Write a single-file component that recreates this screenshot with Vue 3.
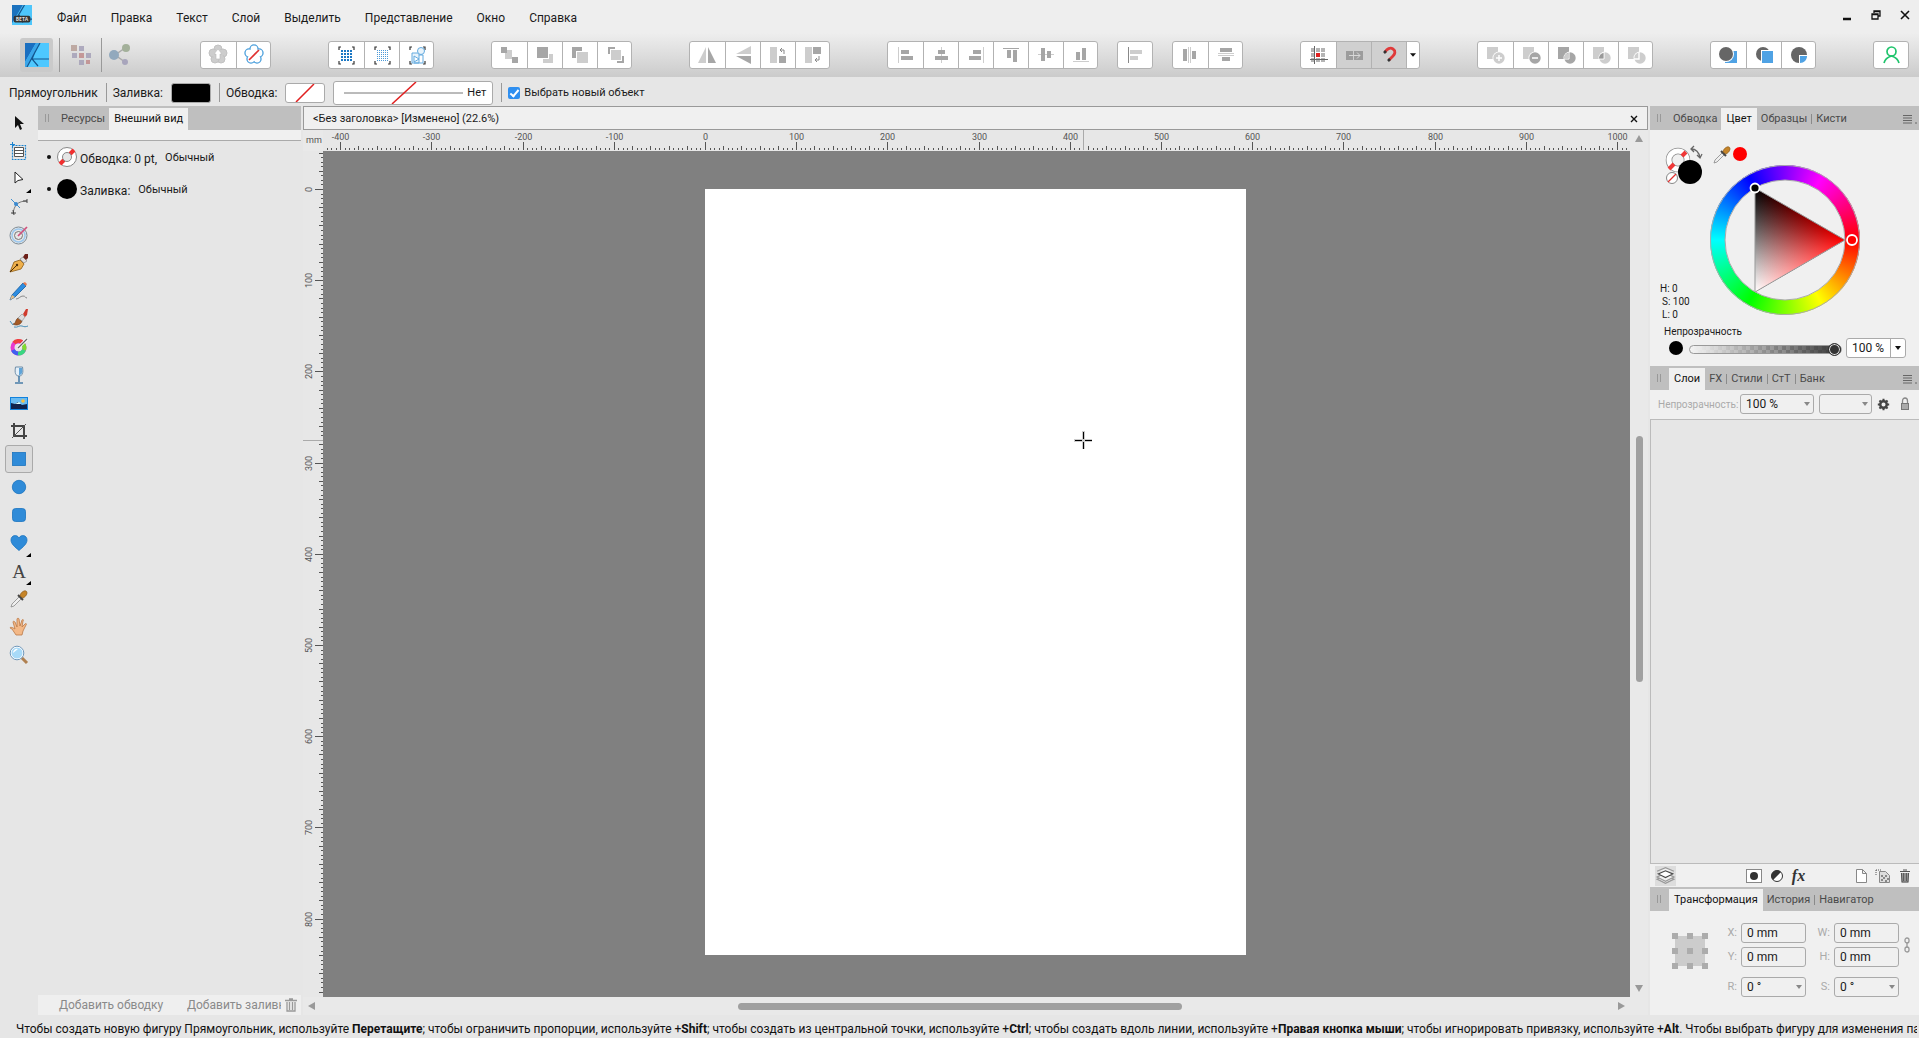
<script setup>
import { ref } from 'vue'

const menus = ['Файл', 'Правка', 'Текст', 'Слой', 'Выделить', 'Представление', 'Окно', 'Справка']

const D = '#a6a6a6'
const L = '#cdcdcd'
const rect = (x, y, w, h, c) => `<rect x="${x}" y="${y}" width="${w}" height="${h}" fill="${c}"/>`
const petals = (attrs, r) =>
  [[17, 7], [22, 11], [20, 17], [14, 17], [12, 11]].map(([x, y]) => `<circle cx="${x}" cy="${y}" r="${r}" ${attrs}/>`).join('')
const corners = '<path d="M10 8V5h2M23 5h2v3M25 19v3h-2M12 22h-2v-3" fill="none" stroke="#333" stroke-width="1.2"/>'
const dots = (step, size, n, c) => {
  let s = ''
  for (let i = 0; i < n; i++) for (let j = 0; j < n; j++) s += rect(12 + i * step, 8 + j * step, size, size, c)
  return s
}
const boolBase = (sq, ci, extra = '') =>
  rect(9, 5, 11, 12, sq) + `<circle cx="21" cy="16" r="6.5" fill="#fff"/><circle cx="21" cy="16" r="5.7" fill="${ci}"/>` + extra

const icons = {
  flowerAdd: petals(`fill="${L}" stroke="#c2c2c2"`, 4) + `<circle cx="17" cy="12.500" r="5" fill="${L}"/><path d="M17 7l4 5h-2v5h-4v-5h-2z" fill="#fff" stroke="#bbb" stroke-width=".6"/>`,
  flowerNone: petals('fill="#fff" stroke="#4a9fdc" stroke-width="2.2"', 3.6) + petals('fill="#fff"', 3.4) + '<circle cx="17" cy="12.500" r="5" fill="#fff"/><path d="M12 18L22 8" stroke="#e03030" stroke-width="1.6"/>',
  gridBold: corners + dots(3, 2, 4, '#1c78c4'),
  gridFine: corners + dots(2, 1, 6, '#4d9ad8'),
  shapesSel: corners + '<g fill="#e8f3fb" stroke="#62aadf"><path d="M12 11h7v10h-7zM14 14v6l5-3z"/><circle cx="21" cy="9" r="3.500"/><path d="M19 13h4v8h-9"  fill="none"/></g>',
  ordBack: rect(13, 8, 7, 9, L) + rect(9, 5, 6, 6, D) + rect(20, 15, 6, 6, D),
  ordDown: rect(15, 12, 10, 9, L) + rect(8, 4, 13, 13, '#fff') + rect(9, 5, 11, 11, D),
  ordUp: rect(9, 5, 10, 11, D) + rect(13, 9, 13, 13, '#fff') + rect(14, 10, 11, 11, L),
  ordFront: rect(10, 5, 7, 7, D) + rect(19, 14, 7, 7, D) + rect(12, 7, 12, 12, '#fff') + rect(13, 8, 10, 10, L),
  flipH: `<path d="M16 5v16H8z" fill="${L}"/><path d="M18 5v16h8z" fill="${D}"/>`,
  flipV: `<path d="M25 4v8H10z" fill="${L}"/><path d="M25 14v8L10 14z" fill="${D}"/>`,
  rotL: rect(9, 5, 7, 16, L) + rect(18, 14, 7, 7, D) + `<path d="M23 12V8h-4m2-2l-2 2 2 2" fill="none" stroke="#888"/>`,
  rotR: rect(9, 5, 7, 16, L) + rect(17, 5, 8, 7, D) + `<path d="M23 14v4h-4m2-2l-2 2 2 2" fill="none" stroke="#888"/>`,
  alL: rect(10, 5, 1, 16, L) + rect(13, 8, 8, 4, D) + rect(13, 14, 12, 4, D),
  alC: rect(17, 5, 1, 16, L) + rect(14, 8, 7, 4, D) + rect(11, 14, 13, 4, D),
  alR: rect(24, 5, 1, 16, L) + rect(14, 8, 8, 4, D) + rect(10, 14, 12, 4, D),
  alT: rect(9, 6, 16, 1, D) + rect(13, 8, 4, 8, D) + rect(19, 8, 4, 12, D),
  alM: rect(9, 12, 16, 1, L) + rect(12, 6, 4, 13, D) + rect(18, 9, 4, 7, D),
  alB: rect(9, 19, 16, 1, L) + rect(12, 10, 4, 8, D) + rect(18, 6, 4, 12, D),
  spL: rect(10, 5, 1, 16, '#888') + rect(12, 8, 12, 4, L) + rect(12, 14, 8, 4, L),
  spH: rect(10, 7, 4, 12, D) + rect(15, 5, 1, 16, L) + rect(17, 5, 1, 16, L) + rect(19, 9, 4, 8, D),
  spV: rect(11, 6, 12, 4, D) + rect(9, 11, 16, 1, L) + rect(9, 13, 16, 1, L) + rect(13, 15, 8, 4, D),
  snapGrid: [0, 1, 2].map(i => [0, 1, 2].map(j => rect(10 + i * 5, 6 + j * 5, 4, 4, i === 1 && j === 1 ? '#e02020' : '#b4b4b4')).join('')).join('') +
    '<path d="M13.500 4v18M9 17.500h18" stroke="#666"/>',
  snapMove: rect(9, 9, 7, 9, '#9c9c9c') + rect(17, 9, 9, 9, '#9c9c9c') + '<path d="M12 13.500h11m-3-3l3 3-3 3" fill="none" stroke="#d8d8d8"/>',
  magnet: '<path d="M13 10c2-3 5-5 8-3s2 5 0 7l-4 4" fill="none" stroke="#e03a3a" stroke-width="2.800"/><path d="M12 11l2-2M16 19l2-2" stroke="#333" stroke-width="2.600"/>',
  caret: '<path d="M3.500 11h7L7 15z" fill="#111"/>',
  bAdd: boolBase(L, L, '<path d="M21 13v6M18 16h6" stroke="#fff" stroke-width="1.500"/>'),
  bSub: boolBase(L, D, '<path d="M18 16h6" stroke="#fff" stroke-width="1.500"/>'),
  bInt: boolBase(D, D, '<path d="M20 10v7h-5" fill="none" stroke="#fff"/><path d="M19.500 11v5.500H15c0-3 2-5 4.500-5.500" fill="#cdcdcd"/>'),
  bXor: boolBase(L, L, '<path d="M20 10v7h-5" fill="none" stroke="#fff"/><path d="M19.500 11v5.500H15c0-3 2-5 4.500-5.500" fill="#999"/>'),
  bDiv: boolBase(L, L, '<path d="M20 10v7h-5" fill="none" stroke="#fff" stroke-width="1.400"/>'),
  inBack: rect(14, 9, 12, 12, '#4fa2e4') + '<circle cx="15" cy="12" r="8" fill="#fff"/><circle cx="15" cy="12" r="7" fill="#666"/>',
  inTop: '<circle cx="16" cy="12" r="7" fill="#666"/>' + rect(14, 8, 13, 14, '#fff') + rect(15, 9, 11, 12, '#4fa2e4'),
  inside: '<circle cx="17" cy="13" r="8" fill="#666"/><path d="M17 13h9v9h-9z" fill="#fff"/><path d="M18 14h7c0 4-3 7-7 7z" fill="#4fa2e4"/>',
  user: '<g fill="none" stroke="#1fc46c" stroke-width="1.700"><circle cx="17.500" cy="9.500" r="4.500"/><path d="M10 21c1-4 4-6 7.500-7 3.500 1 6.500 3 7.500 7"/></g>'
}

const groups = [
  ['flowerAdd', 'flowerNone'],
  ['gridBold', 'gridFine', 'shapesSel'],
  ['ordBack', 'ordDown', 'ordUp', 'ordFront'],
  ['flipH', 'flipV', 'rotL', 'rotR'],
  ['alL', 'alC', 'alR', 'alT', 'alM', 'alB'],
  ['spL'],
  ['spH', 'spV'],
  ['snapGrid', 'snapMove', 'magnet', 'caret'],
  ['bAdd', 'bSub', 'bInt', 'bXor', 'bDiv'],
  ['inBack', 'inTop', 'inside'],
  ['user']
]

const blue = 'fill="#2f8bd8" stroke="#1b74bf" stroke-width=".8"'
const dropper = '<path d="M2 18l1-3 8-8 2 2-8 8z" fill="#eee" stroke="#888" stroke-width=".8"/><path d="M9 6l5 5" stroke="#444" stroke-width="2"/><path d="M11 7c0-3 4-6 6-5s1 5-3 7z" fill="#c58428" stroke="#7d5014" stroke-width=".6"/>'
const tools = [
  { n: 'Перемещение', s: '<path d="M6 3v12l3-3 2 5 2-1-2-5h4z" fill="#111"/>' },
  { n: 'Монтажная область', s: '<rect x="3.500" y="4.500" width="13" height="14" fill="none" stroke="#1c84d0" stroke-dasharray="2 1" stroke-width="1.200"/><path d="M1 3.500h5M3.500 1v5" stroke="#1c84d0"/><path d="M5.500 6.500h9v9h-9zM5.500 9.500h9M5.500 12.500h9" fill="#fff" stroke="#555"/>' },
  { n: 'Узел', m: 1, s: '<path d="M6 3v11l3-2.500 5-1z" fill="#fff" stroke="#222"/>' },
  { n: 'Угол', s: '<path d="M18 4C9 4 5 8 4 17" fill="none" stroke="#777"/><path d="M2 2l9 9" stroke="#4090d0"/><circle cx="7" cy="7" r="2" fill="#3a8ad0"/><path d="M18 2v4M14 4h4M2 16h5M4 13l1 5" stroke="#444"/>' },
  { n: 'Контур', s: '<g fill="none"><circle cx="9.500" cy="10.500" r="8.500" stroke="#7d8b95"/><circle cx="9.500" cy="10.500" r="6.500" stroke="#9cc8ee" stroke-width="1.500"/><circle cx="9.500" cy="10.500" r="4" stroke="#777"/></g><path d="M9 11l9-9" stroke="#d0507c" stroke-width="1.700"/>' },
  { n: 'Перо', s: '<path d="M1 19L5 9l6-2 4 4-3 5z" fill="#eeb04c" stroke="#8c5a14" stroke-width=".8"/><path d="M1 19l7-7" stroke="#503008"/><circle cx="8" cy="12" r="1.200" fill="#503008"/><path d="M11 6l3-2 4 4-3 2z" fill="#ddd" stroke="#777" stroke-width=".6"/><path d="M14 4l2-3h3v4l-2 2z" fill="#6c1f18"/>' },
  { n: 'Карандаш', s: '<path d="M1 19l2-5 11-12 3 3L6 16z" fill="#2e8de0" stroke="#155a9c" stroke-width=".8"/><path d="M1 19l2-5 3 2z" fill="#e9be84"/><path d="M14 2l2-1 2 2-1 2z" fill="#e87c50"/><path d="M7 18c3 0 4-3 7-3s2 2 4 2" fill="none" stroke="#888"/>' },
  { n: 'Кисть', s: '<path d="M4 15c3 0 2-4 5-6l4 3c-1 4-6 5-9 3z" fill="#a65a24" stroke="#5c2f10" stroke-width=".6"/><path d="M9 9l4-4 3 3-3 4z" fill="#ddd" stroke="#888" stroke-width=".6"/><path d="M14 5l3-5h2l-1 6-2 2z" fill="#d03a2c"/><path d="M1 12l3 4M5 18c4 1 5-2 8-1s3 1 6 0" fill="none" stroke="#4a90b8"/>' },
  { n: 'Заливка', s: '<circle cx="9.500" cy="10.500" r="6" fill="none" stroke="#e83ad0" stroke-width="4"/><path d="M5 6a6 6 0 0 1 8-1" fill="none" stroke="#f04040" stroke-width="4"/><path d="M14 7a6 6 0 0 1 1 6" fill="none" stroke="#80dc30" stroke-width="4"/><path d="M15 13a6 6 0 0 1-6 3.500" fill="none" stroke="#38d880" stroke-width="4"/><path d="M9 16.500A6 6 0 0 1 4 13" fill="none" stroke="#3f60f0" stroke-width="4"/><path d="M9 11L18 2" stroke="#fff" stroke-width="3"/><path d="M9 11L18 2" stroke="#666" stroke-width="1.300"/>' },
  { n: 'Прозрачность', s: '<path d="M6.500 2h7c1 6 0 9-3.500 9S5.500 8 6.500 2z" fill="#e4eff8" stroke="#6f8ea8"/><path d="M10 3h3c1 5-.5 7-3 7z" fill="#5fa4d8"/><path d="M10 11v6M6 18h8" stroke="#4a7ea8" stroke-width="1.600"/>' },
  { n: 'Изображение', s: '<rect x="1.500" y="4.500" width="17" height="12" fill="#6bbcf2" stroke="#1282dc"/><circle cx="14" cy="8" r="1.800" fill="#f8c040"/><path d="M2 10l4 1 3-2 4 3 5-1v5H2z" fill="#11234c"/><path d="M6 11l4-2 2 2z" fill="#dff"/>' },
  { n: 'Обрезка', s: '<path d="M5 2v13h13M2 5h13v13" fill="none" stroke="#444" stroke-width="2"/><path d="M3 17L17 3" stroke="#555"/>' },
  { n: 'Прямоугольник', a: 1, s: `<rect x="3.500" y="3.500" width="13" height="13" ${blue}/>` },
  { n: 'Эллипс', s: `<circle cx="10" cy="10" r="6.700" ${blue}/>` },
  { n: 'Скругленный прямоугольник', s: `<rect x="3.500" y="3.500" width="13" height="13" rx="3" ${blue}/>` },
  { n: 'Сердце', m: 1, s: `<path d="M10 17.500C6 14 2 11 2 7c0-5 6-6 8-2 2-4 8-3 8 2 0 4-4 7-8 10.500z" ${blue}/>` },
  { n: 'Текст', m: 1, s: '<text x="10" y="17" text-anchor="middle" font-family="Liberation Serif, serif" font-size="19" fill="#444">A</text>' },
  { n: 'Пипетка', s: dropper },
  { n: 'Рука', s: '<path d="M7 18l-4-6-2-1c0-1 2-1 5 1L4 5c0-1 1-1 2 0l2 5V2c0-1 2-1 2 0l1 7 2-6c1-1 2 0 1 1l-1 6 3-3c1-1 2 0 1 1l-3 6-1 4z" fill="#f3b887" stroke="#bb7846" stroke-width=".8"/>' },
  { n: 'Масштаб', s: '<path d="M12 12l6 6" stroke="#b08050" stroke-width="3"/><circle cx="8" cy="8" r="6.300" fill="#a8daf8" stroke="#fff" stroke-width="1.500"/><circle cx="8" cy="8" r="6.800" fill="none" stroke="#4d7ea8" stroke-width=".8"/><path d="M4 8a4 4 0 0 1 5-4z" fill="#fff"/>' }
]

const SCALE = 0.912
const ORIGIN_X = 382
const ORIGIN_Y = 38
const makeTicks = (from, to) => {
  const out = []
  for (let v = from; v <= to; v += 5) out.push({ v, len: v % 100 === 0 ? 8 : v % 20 === 0 ? 4 : 2 })
  return out
}
const ticksX = makeTicks(-415, 1010)
const ticksY = makeTicks(-40, 880)
const px = v => Math.round(ORIGIN_X + v * SCALE) + 0.5
const py = v => Math.round(ORIGIN_Y + v * SCALE) + 0.5

const selectNew = ref(true)
const opacity = ref(100)

const hints = [
  ['Чтобы создать новую фигуру Прямоугольник, используйте ', 'Перетащите'],
  ['; чтобы ограничить пропорции, используйте +', 'Shift'],
  ['; чтобы создать из центральной точки, используйте +', 'Ctrl'],
  ['; чтобы создать вдоль линии, используйте +', 'Правая кнопка мыши'],
  ['; чтобы игнорировать привязку, используйте +', 'Alt'],
  ['. Чтобы выбрать фигуру для изменения параметров', '']
]
const fields = [
  [['X', '0 mm'], ['W', '0 mm']],
  [['Y', '0 mm'], ['H', '0 mm']]
]
const anchors = [0, 1, 2, 3, 4, 5, 6, 7, 8]
</script>

<template>
  <div class="app">
    <header class="title">
      <svg class="logo" viewBox="0 0 24 24">
        <rect width="24" height="24" fill="#4ec6fb" /><path d="M0 0h13L0 22z" fill="#1b72be" />
        <path d="M15 0L3 20M8 11l5 10M4 17h20" stroke="#14568f" stroke-width="1.5" fill="none" />
        <rect x="2" y="13" width="20" height="8" rx="2" fill="#333" />
        <text x="12" y="19" text-anchor="middle" font-size="6" font-weight="700" fill="#ddd" font-family="Open Sans, sans-serif">BETA</text>
      </svg>
      <nav class="menu"><button v-for="m in menus" :key="m">{{ m }}</button></nav>
      <div class="win">
        <button aria-label="Свернуть"><svg viewBox="0 0 12 12"><path d="M2 10h8" stroke="#111" stroke-width="2.500" /></svg></button>
        <button aria-label="Восстановить"><svg viewBox="0 0 12 12"><path d="M4 4V2h6v5H8M2 5h6v5H2zM2 5.500h6M4 2.500h6" fill="none" stroke="#111" stroke-width="1.300" /></svg></button>
        <button aria-label="Закрыть"><svg viewBox="0 0 12 12"><path d="M2 2l8 8M10 2l-8 8" stroke="#111" stroke-width="1.600" /></svg></button>
      </div>
    </header>

    <div class="toolbar">
      <div class="personas">
        <button class="persona on" aria-label="Designer">
          <svg viewBox="0 0 24 24">
            <rect width="24" height="24" fill="#4ec8ff" /><path d="M0 0h11L0 19z" fill="#1b6fc0" /><path d="M11 0h4L2 24H0v-5z" fill="#3aa5e8" />
            <path d="M15 0L2 24M7 16h17M10 9l-3 7 6 7" stroke="#14568f" stroke-width="1.200" fill="none" />
          </svg>
        </button>
        <button class="persona" aria-label="Pixel">
          <svg viewBox="0 0 24 24" opacity=".85">
            <path d="M2 2h6v6H2z" fill="#b8a098" /><path d="M10 3h5v5h-5zM3 10h5v5H3zM17 10h5v5h-5zM10 17h5v5h-5z" fill="#a5a1b8" /><path d="M10 10h5v5h-5zM17 17h4v4h-4z" fill="#c08c8c" />
          </svg>
        </button>
        <button class="persona" aria-label="Export">
          <svg viewBox="0 0 24 24"><path d="M17 5L7 12l10 7" fill="none" stroke="#aaa" stroke-width="1.500" /><circle cx="6" cy="12" r="5" fill="#92a9bd" /><circle cx="18" cy="5" r="4" fill="#a3b09a" /><circle cx="17" cy="19" r="3" fill="#a8a5bc" /></svg>
        </button>
      </div>
      <div v-for="(g, i) in groups" :key="i" class="group" :class="{ near: i === 5 || i === 6 }">
        <button v-for="b in g" :key="b" :class="{ pressed: b === 'snapMove' || b === 'magnet', slim: b === 'caret' }" :aria-label="b">
          <svg :viewBox="b === 'caret' ? '0 0 14 26' : '0 0 34 26'" v-html="icons[b]" />
        </button>
      </div>
    </div>

    <div class="context">
      <span>Прямоугольник</span><i class="bar"></i>
      <span>Заливка:</span><button class="swatch black" aria-label="Заливка"></button><i class="bar"></i>
      <span>Обводка:</span>
      <button class="swatch" aria-label="Обводка"><svg viewBox="0 0 38 18"><path d="M10 18L28 0" stroke="#e02020" stroke-width="1.500" /></svg></button>
      <button class="stroke">
        <svg viewBox="0 0 130 22"><path d="M10 11h119" stroke="#777" /><path d="M58 22L82 0" stroke="#e02020" stroke-width="1.500" /></svg><span>Нет</span>
      </button><i class="bar"></i>
      <label class="check"><input v-model="selectNew" type="checkbox" />Выбрать новый объект</label>
    </div>

    <main class="work">
      <aside class="tools">
        <button v-for="t in tools" :key="t.n" :class="{ sel: t.a }" :aria-label="t.n">
          <svg viewBox="0 0 20 20" v-html="t.s" /><i v-if="t.m" class="more"></i>
        </button>
      </aside>

      <section class="look">
        <div class="tabs"><i class="grip"></i><button>Ресурсы</button><button class="on">Внешний вид</button></div>
        <div class="strip"></div>
        <div class="attr">
          <b></b>
          <svg viewBox="0 0 22 22"><circle cx="11" cy="11" r="9.500" fill="#fff" stroke="#888" /><path d="M4 18l4-4M14 8l4-4" stroke="#f03030" stroke-width="4" /><circle cx="11" cy="11" r="4.500" fill="#e6e6e6" stroke="#888" /></svg>
          <span>Обводка: 0 pt,</span><em>Обычный</em>
        </div>
        <div class="attr">
          <b></b>
          <svg viewBox="0 0 22 22"><circle cx="11" cy="11" r="10" fill="#000" /></svg>
          <span>Заливка:</span><em>Обычный</em>
        </div>
        <footer class="addbar">
          <button>Добавить обводку</button><button class="cut">Добавить заливку</button>
          <button aria-label="Удалить" class="bin"><svg viewBox="0 0 12 14"><path d="M0 2.500h12M4 1h4M2 4v9h8V4M4.500 4v8M7.500 4v8" fill="none" stroke="#999" stroke-width="1.300" /></svg></button>
        </footer>
      </section>

      <section class="doc">
        <div class="doctab"><span>&lt;Без заголовка&gt; [Изменено] (22.6%)</span>
          <button aria-label="Закрыть документ"><svg viewBox="0 0 10 10"><path d="M2 2l6 6M8 2L2 8" stroke="#111" stroke-width="1.400" /></svg></button>
        </div>
        <div class="view">
          <span class="unit">mm</span>
          <svg class="rx">
            <g v-for="t in ticksX" :key="t.v">
              <path :d="`M${px(t.v)} ${20 - t.len}V20`" stroke="#555" />
              <text v-if="t.v % 100 === 0" :x="px(t.v)" y="10" text-anchor="middle">{{ t.v }}</text>
            </g>
            <path d="M760.500 0v20" stroke="#aaa" />
          </svg>
          <div class="vbar"><i class="up"></i><i class="thumb"></i><i class="down"></i></div>
          <svg class="ry">
            <g v-for="t in ticksY" :key="t.v">
              <path :d="`M${20 - t.len} ${py(t.v)}H20`" stroke="#555" />
              <text v-if="t.v % 100 === 0" :transform="`translate(9 ${py(t.v)}) rotate(-90)`" text-anchor="middle">{{ t.v }}</text>
            </g>
            <path d="M0 289.500h20" stroke="#aaa" />
          </svg>
          <div class="canvas">
            <div class="page"></div>
            <svg class="cross" viewBox="0 0 20 20"><path d="M10.500 1v18M1 10.500h18" stroke="#ccc" stroke-width="3" /><path d="M10.500 2v7M10.500 12v7M2 10.500h7M12 10.500h7" stroke="#000" stroke-width="1" /></svg>
          </div>
          <div class="hbar"><i class="left"></i><i class="thumb"></i><i class="right"></i></div>
        </div>
      </section>

      <aside class="side">
        <div class="tabs"><i class="grip"></i><button>Обводка</button><button class="on">Цвет</button><button>Образцы</button><i class="sep"></i><button>Кисти</button>
          <button class="burger" aria-label="Меню панели"><svg viewBox="0 0 14 10"><path d="M0 1.500h9M0 4h9M0 6.500h9M0 9h9M12 9h2" stroke="#666" /></svg></button></div>
        <div class="color">
          <svg class="picks" viewBox="0 0 84 42">
            <circle cx="14" cy="16" r="9" fill="none" stroke="#888" stroke-width="6.500" /><circle cx="14" cy="16" r="9" fill="none" stroke="#fff" stroke-width="5" />
            <path d="M5 25l5-5M18 12l4-4" stroke="#f03838" stroke-width="4" />
            <circle cx="26" cy="28" r="12" /><circle cx="8" cy="34" r="5.500" fill="#fff" stroke="#888" /><path d="M4 38l8-8" stroke="#e03030" stroke-width="1.300" />
            <path d="M27 5c5 0 8 3 9 9M30 2l-3 3 3 3M33 11l3 3 2-4" fill="none" stroke="#666" stroke-width="1.300" />
            <g transform="translate(48 1)" v-html="dropper" /><circle cx="76" cy="10" r="7" fill="#f00" />
          </svg>
          <div class="wheel"><div class="hole"></div><div class="tri"></div>
            <svg viewBox="0 0 150 150"><path d="M45 23l90 52-90 52z" fill="none" stroke="#999" /><circle cx="75" cy="75" r="74.500" fill="none" stroke="#aaa" /><circle cx="75" cy="75" r="60" fill="none" stroke="#aaa" />
              <circle cx="45" cy="23" r="4.500" stroke="#fff" stroke-width="1.800" /><circle cx="142" cy="75" r="5" fill="#f00" stroke="#fff" stroke-width="1.800" /></svg>
          </div>
          <div class="hsl"><div>H: 0</div><div>S: 100</div><div>L: 0</div></div>
          <label class="oplabel" for="op">Непрозрачность</label>
          <div class="oprow"><i class="dot"></i><input id="op" v-model="opacity" type="range" min="0" max="100" />
            <div class="combo"><input aria-label="Непрозрачность, %" value="100 %" /><button aria-label="Открыть"><i class="tri-d"></i></button></div></div>
        </div>

        <div class="tabs"><i class="grip"></i><button class="on">Слои</button><button>FX</button><i class="sep"></i><button>Стили</button><i class="sep"></i><button>СтТ</button><i class="sep"></i><button>Банк</button>
          <button class="burger" aria-label="Меню панели"><svg viewBox="0 0 14 10"><path d="M0 1.500h9M0 4h9M0 6.500h9M0 9h9M12 9h2" stroke="#666" /></svg></button></div>
        <div class="layrow">
          <label for="lop">Непрозрачность:</label>
          <span class="sel w74"><select id="lop"><option>100 %</option></select></span>
          <span class="sel w53"><select aria-label="Режим наложения"><option></option></select></span>
          <svg class="gear" viewBox="0 0 16 16"><circle cx="8" cy="8" r="4" fill="none" stroke="#444" stroke-width="3" /><path d="M8 1v3M8 12v3M1 8h3M12 8h3M3 3l2 2M11 11l2 2M13 3l-2 2M5 11l-2 2" stroke="#444" stroke-width="2.500" /></svg>
          <svg class="lock" viewBox="0 0 10 14"><path d="M2.500 7V4c0-4 5-4 5 0v3" fill="none" stroke="#888" stroke-width="1.300" /><rect x="1.500" y="6.500" width="7" height="6" fill="#aaa" stroke="#777" /></svg>
        </div>
        <div class="layers"></div>
        <div class="laybar">
          <button class="stack" aria-label="Слои"><svg viewBox="0 0 20 18"><g fill="#f0f0f0" stroke="#999" stroke-width="1.200"><path d="M2 12l8 4 8-4-8-4z" /><path d="M2 10l8 4 8-4-8-4z" /><path d="M2 4.500L10 1l8 3.500" /></g><path d="M3 7l7-3 7 3-7 3.500z" fill="#fff" stroke="#444" /></svg></button>
          <span class="mid">
            <button aria-label="Маска"><svg viewBox="0 0 16 14"><rect x=".5" y=".5" width="15" height="13" fill="#fff" stroke="#888" /><circle cx="8" cy="7" r="4" fill="#333" /></svg></button>
            <button aria-label="Коррекция"><svg viewBox="0 0 16 14"><circle cx="8" cy="7" r="5.500" fill="#fff" stroke="#333" /><path d="M4 11a5.500 5.500 0 0 1 8-8z" fill="#333" /></svg></button>
            <button class="fx" aria-label="Эффекты">fx</button>
          </span>
          <button aria-label="Новый слой"><svg viewBox="0 0 16 14"><path d="M3.500.5h6l4 4v9h-10zM9.500.5v4h4" fill="#fff" stroke="#888" /></svg></button>
          <button aria-label="Новый пиксельный слой"><svg viewBox="0 0 16 14"><path d="M4.500 2.500h6l4 4v7h-10z" fill="#ddd" stroke="#888" /><path d="M6 6h2v2H6zM10 6h2v2h-2zM8 8h2v2H8zM12 9h2v2h-2zM6 10h2v2H6zM10 11h2v2h-2z" fill="#888" /><path d="M1 1h6M1 1v5" stroke="#555" stroke-dasharray="1 1" /></svg></button>
          <button aria-label="Удалить слой"><svg viewBox="0 0 16 14"><path d="M4 4h8l-1 9.500H5z" fill="#aaa" /><path d="M3 2.500h10M6 1h4M4.500 4l.5 9h6l.5-9M6.700 4v8M9.300 4v8" fill="none" stroke="#555" stroke-width="1.200" /></svg></button>
        </div>

        <div class="tabs"><i class="grip"></i><button class="on">Трансформация</button><button>История</button><i class="sep"></i><button>Навигатор</button></div>
        <div class="transform">
          <div class="anchor"><i v-for="a in anchors" :key="a"></i></div>
          <div class="grid">
            <template v-for="(r, i) in fields" :key="i">
              <template v-for="f in r" :key="f[0]"><label :for="'f' + f[0]">{{ f[0] }}:</label><input :id="'f' + f[0]" :value="f[1]" /></template>
            </template>
            <template v-for="n in ['R', 'S']" :key="n">
              <label class="last" :for="'f' + n">{{ n }}:</label><span class="sel last"><select :id="'f' + n"><option>0 °</option></select></span>
            </template>
          </div>
          <svg class="link" viewBox="0 0 8 16"><g fill="none" stroke="#999" stroke-width="1.300"><rect x="2" y="1" width="4" height="5" rx="2" /><rect x="2" y="10" width="4" height="5" rx="2" /><path d="M4 5v6" /></g></svg>
        </div>
      </aside>
    </main>

    <footer class="status"><template v-for="(h, i) in hints" :key="i">{{ h[0] }}<b>{{ h[1] }}</b></template></footer>
  </div>
</template>

<style>
html, body { margin: 0; background: #e6e6e6; overflow: hidden; }
</style>

<style scoped>
.app { display: flex; flex-direction: column; height: 100vh; background: #e6e6e6; color: #1a1a1a; font: 12px/16px Roboto, "Noto Sans", sans-serif; }
.app * { box-sizing: border-box; }
button, input, select { font: inherit; color: inherit; margin: 0; padding: 0; border: 0; background: none; }
svg { display: block; }

.title { display: flex; align-items: center; height: 33px; padding: 0 8px 0 12px; background: #eee; flex: none; }
.logo { width: 20px; height: 20px; margin-bottom: 3px; }
.menu { display: flex; gap: 24px; margin: 3px 0 0 25px; flex: 1; }
.win { display: flex; gap: 17px; margin-bottom: 3px; }
.win svg { width: 12px; height: 12px; }

.toolbar { display: flex; align-items: center; height: 44px; padding: 0 9px 0 20px; flex: none; background: linear-gradient(#eee, #ddd 50%, #cbcbcb); }
.personas { display: flex; width: 123px; height: 34px; }
.persona { width: 33px; display: flex; align-items: center; justify-content: center; }
.persona svg { width: 24px; height: 24px; }
.persona.on { background: #cacaca; border-radius: 3px; }
.persona + .persona { width: 42px; border-left: 1px solid #999; }
.persona.on + .persona { margin-left: 6px; }
.persona:last-child { padding-right: 6px; }
.group { display: flex; height: 28px; margin-left: 57px; border: 1px solid #b2b2b2; border-radius: 3px; background: #fff; overflow: hidden; flex: none; }
.group.near { margin-left: 19px; }
.group button { width: 35px; }
.group button:last-child { width: 34px; }
.group button + button { border-left: 1px solid #b2b2b2; }
.group .slim:last-child { width: 13px; }
.group .pressed { background: #d0d0d0; }
.group svg { height: 26px; width: 34px; }
.group .slim svg { width: 12px; }

.context { display: flex; align-items: center; height: 29px; padding: 2px 9px 0; flex: none; }
.bar { width: 1px; height: 19px; background: #999; margin: 0 6px 0 8px; }
.swatch { width: 40px; height: 20px; margin-left: 8px; background: #fff; border: 1px solid #aaa; border-radius: 3px; }
.swatch.black { background: #000; }
.swatch svg { width: 38px; height: 18px; }
.stroke { display: flex; align-items: center; width: 160px; height: 24px; margin-left: 8px; background: #fff; border: 1px solid #aaa; border-radius: 3px; font-size: 11px; }
.stroke svg { width: 130px; height: 22px; margin-right: 3px; }
.check { display: flex; align-items: center; font-size: 11px; }
.check input { appearance: none; width: 12px; height: 12px; margin-right: 4px; background: #2f8ff0; border-radius: 2px; display: grid; place-items: center; }
.check input:checked::after { content: ""; width: 3px; height: 7px; border: solid #fff; border-width: 0 2px 2px 0; transform: rotate(40deg); }

.work { display: flex; flex: 1; min-height: 0; }
.tools { width: 38px; padding: 3px 5px; flex: none; }
.tools button { position: relative; width: 28px; height: 28px; display: grid; place-items: center; }
.tools svg { width: 20px; height: 20px; }
.tools .sel { border: 1px solid #aaa; border-radius: 3px; background: #dcdcdc; }
.more { position: absolute; right: 2px; bottom: 0; border: solid transparent; border-width: 5px 0 0 5px; border-right: 0; border-bottom: 4px solid #000; border-top: 0; }

.look { width: 263px; margin-right: 2px; flex: none; display: flex; flex-direction: column; }
.tabs { display: flex; align-items: flex-end; height: 24px; padding: 0 2px 0 7px; background: #bfbfbf; flex: none; font-size: 11px; }
.tabs button { height: 22px; padding: 0 4px; color: #4a4a4a; white-space: nowrap; }
.tabs .on { background: #f0f0f0; color: #111; padding: 0 5px; }
.grip { width: 4px; height: 8px; margin: 0 8px 8px 0; border: solid #999; border-width: 0 1px; }
.sep { width: 1px; height: 10px; margin-bottom: 6px; background: #8a8a8a; }
.tabs .burger { margin-left: auto; padding: 0; }
.burger svg { width: 14px; height: 10px; }
.strip { height: 11px; background: #f0f0f0; border-bottom: 1px solid #aaa; }
.attr { display: flex; align-items: center; height: 32px; padding-left: 9px; }
.attr b { width: 4px; height: 4px; border-radius: 2px; background: #111; margin-right: 5px; }
.attr svg { width: 22px; height: 22px; margin-right: 2px; }
.attr span { margin-right: 8px; padding-top: 3px; }
.attr em { font-style: normal; font-size: 11px; padding-top: 2px; }
.addbar { display: flex; align-items: center; height: 20px; margin-top: auto; padding-left: 21px; background: #efefef; color: #8a8a8a; }
.addbar button { white-space: nowrap; }
.addbar .cut { width: 94px; margin-left: auto; overflow: hidden; text-align: left; }
.addbar .bin { margin: 0 4px 0 4px; }
.bin svg { width: 12px; height: 14px; }

.doc { flex: 1; min-width: 0; display: flex; flex-direction: column; margin-right: 2px; }
.doctab { display: flex; align-items: center; justify-content: space-between; height: 24px; padding: 2px 8px 0 9px; border: 1px solid #999; background: #f0f0f0; flex: none; font-size: 11px; }
.doctab svg { width: 10px; height: 10px; }
.view { flex: 1; min-height: 0; display: grid; grid-template: 21px 1fr 18px / 20px 1fr 18px; background: #e9e9e9; }
.unit { font-size: 9px; line-height: 20px; padding-left: 3px; color: #555; }
.rx, .ry { width: 100%; height: 100%; overflow: hidden; font-size: 9px; fill: #555; background: #e7e7e7; }
.canvas { position: relative; overflow: hidden; background: #808080; }
.page { position: absolute; left: 382px; top: 38px; width: 541px; height: 766px; background: #fff; }
.cross { position: absolute; left: 750px; top: 279px; width: 20px; height: 20px; }
.vbar { grid-column: 3; grid-row: 1 / 3; display: flex; flex-direction: column; align-items: center; padding: 5px 0; }
.vbar .thumb { width: 7px; height: 246px; margin: 294px 0 auto; border-radius: 4px; background: #a0a0a0; }
.up { border: 4px solid transparent; border-top: 0; border-bottom: 7px solid #999; }
.down { border: 4px solid transparent; border-bottom: 0; border-top: 7px solid #999; }
.ry { grid-column: 1; grid-row: 2; }
.hbar { grid-column: 1 / 3; display: flex; align-items: center; padding: 0 5px; }
.hbar .thumb { width: 444px; height: 7px; margin: 0 auto 0 423px; border-radius: 4px; background: #a0a0a0; }
.left { border: 4px solid transparent; border-left: 0; border-right: 7px solid #999; }
.right { border: 4px solid transparent; border-right: 0; border-left: 7px solid #999; }

.side { width: 269px; flex: none; display: flex; flex-direction: column; background: #f0f0f0; font-size: 11px; }
.color { height: 236px; position: relative; flex: none; }
.picks { position: absolute; left: 14px; top: 14px; width: 84px; height: 42px; }
.wheel { position: absolute; left: 60px; top: 35px; width: 150px; height: 150px; border-radius: 50%; background: conic-gradient(from 90deg, red, yellow, lime, cyan, blue, magenta, red); }
.wheel > * { position: absolute; inset: 0; }
.wheel .hole { inset: 15px; border-radius: 50%; background: #f0f0f0; }
.wheel .tri { inset: 23px 15px 23px 45px; clip-path: polygon(0 0, 100% 50%, 0 100%); background: linear-gradient(to right, transparent, red), conic-gradient(from 240deg at 100% 50%, #fff, #000 60deg, #000); }
.hsl { position: absolute; left: 10px; top: 152px; font-size: 10px; line-height: 13px; }
.hsl div + div { padding-left: 2px; }
.oplabel { position: absolute; left: 14px; top: 194px; font-size: 10px; }
.oprow { display: flex; align-items: center; padding: 208px 13px 0 19px; }
.dot { width: 14px; height: 14px; border-radius: 50%; background: #000; }
.oprow > input { appearance: none; flex: 1; min-width: 0; height: 14px; margin: 2px 4px 0 6px; }
.oprow > input::-webkit-slider-runnable-track { height: 9px; border: 1px solid #999; border-radius: 5px; background: linear-gradient(to right, #f4f4f4, #3338 60%, #333), repeating-conic-gradient(#ccc 0 25%, #fff 0 50%) 0 0 / 8px 8px; }
.oprow > input::-webkit-slider-thumb { appearance: none; width: 13px; height: 13px; margin-top: -3px; border-radius: 50%; background: #333; border: 1px solid #333; box-shadow: inset 0 0 0 1px #ddd; }
.combo { display: flex; width: 60px; height: 20px; border: 1px solid #aaa; border-radius: 3px; background: #fff; font-size: 12px; }
.combo input { width: 43px; padding-left: 5px; }
.combo button { flex: 1; border-left: 1px solid #aaa; display: grid; place-items: center; }
.tri-d { border: 3px solid transparent; border-bottom: 0; border-top: 4px solid #111; }

.layrow { display: flex; align-items: center; height: 29px; padding: 0 9px 1px 8px; flex: none; }
.layrow label { width: 82px; padding-top: 2px; font-size: 10px; color: #aaa; white-space: nowrap; }
.sel { position: relative; display: block; }
.sel select { appearance: none; width: 100%; height: 20px; padding-left: 5px; border: 1px solid #aaa; border-radius: 3px; display: block; outline: 0; font-size: 12px; }
.side .sel::after { content: ""; position: absolute; right: 4px; top: 8px; border: 3px solid transparent; border-top: 4px solid #888; border-bottom: 0; pointer-events: none; }
.w74 { width: 74px; margin-right: 5px; }
.w53 { width: 53px; }
.gear { width: 13px; height: 13px; margin: 0 auto 0 5px; }
.lock { width: 10px; height: 14px; }
.layers { flex: 1; background: #e6e6e6; border: 1px solid #bbb; border-right: 0; }
.laybar { display: flex; align-items: center; height: 23px; padding: 0 6px 0 5px; gap: 6px; flex: none; }
.laybar svg { width: 16px; height: 14px; }
.laybar .stack { background: #ddd; }
.laybar .stack svg { width: 21px; height: 20px; }
.mid { display: flex; gap: 7px; margin: 0 auto; padding-left: 22px; }
.fx { font: italic 700 16px/14px "Liberation Serif", serif; color: #333; }

.transform { display: flex; height: 104px; padding: 12px 8px 0 22px; flex: none; }
.anchor { display: grid; grid-template-columns: repeat(3, 6px); justify-content: space-between; align-content: space-between; width: 36px; height: 36px; margin-top: 10px; background: linear-gradient(#ccc, #ccc) center / 30px 30px no-repeat; }
.anchor i { width: 6px; height: 6px; background: #acacac; }
.grid { display: grid; grid-template-columns: 33px 65px 28px 65px; row-gap: 4px; height: 74px; align-content: start; }
.grid label { color: #aaa; text-align: right; padding-right: 4px; line-height: 20px; }
.grid input { height: 20px; min-width: 0; padding-left: 5px; border: 1px solid #aaa; border-radius: 3px; font-size: 12px; }
.grid .last { margin-top: 6px; }
.link { width: 8px; height: 16px; margin: 14px 0 0 4px; }

.status { height: 23px; padding: 6px 0 0; margin: 0 2px 0 16px; flex: none; white-space: nowrap; overflow: hidden; color: #111; }
</style>
